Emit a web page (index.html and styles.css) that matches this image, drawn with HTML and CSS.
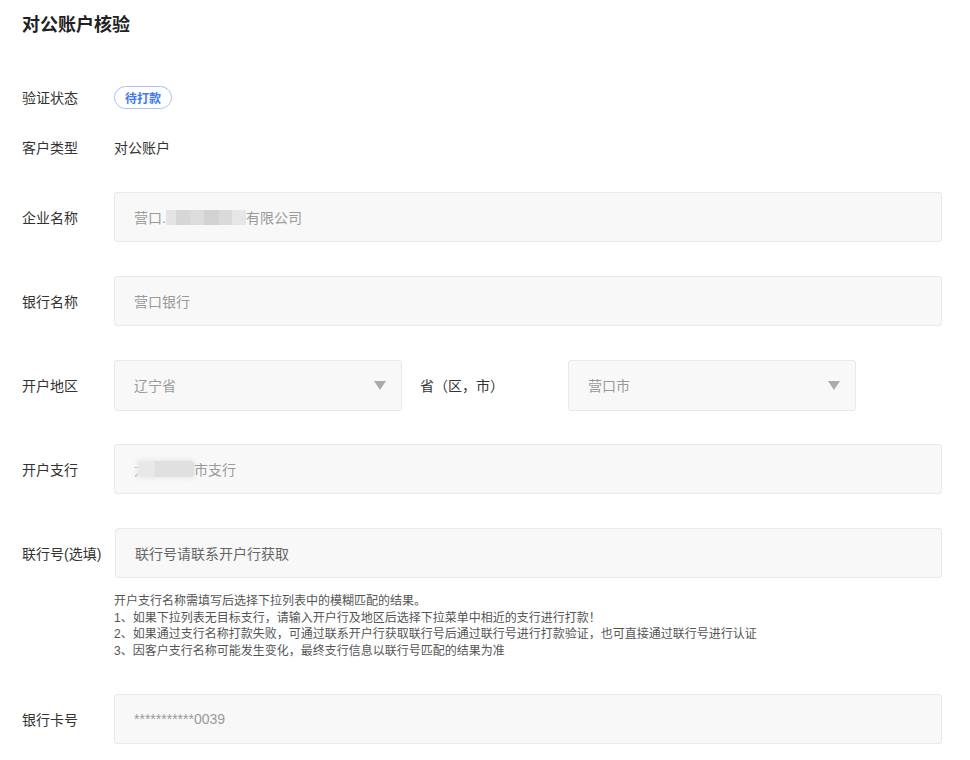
FILE: index.html
```html
<!DOCTYPE html>
<html lang="zh-CN">
<head>
<meta charset="utf-8">
<title>对公账户核验</title>
<link rel="stylesheet" href="styles.css">
</head>
<body>
<div class="page">
  <h1 class="title">对公账户核验</h1>

  <div class="row row-status">
    <div class="label">验证状态</div>
    <span class="badge">待打款</span>
  </div>

  <div class="row row-type">
    <div class="label">客户类型</div>
    <div class="value">对公账户</div>
  </div>

  <div class="row row-field row-first">
    <div class="label">企业名称</div>
    <div class="input">营口.<span class="mosaic mosaic-wide"></span>有限公司</div>
  </div>

  <div class="row row-field">
    <div class="label">银行名称</div>
    <div class="input">营口银行</div>
  </div>

  <div class="row row-field">
    <div class="label">开户地区</div>
    <div class="select">辽宁省<span class="caret"></span></div>
    <span class="region-text">省（区，市）</span>
    <div class="select">营口市<span class="caret"></span></div>
  </div>

  <div class="row row-field">
    <div class="label">开户支行</div>
    <div class="input">大<span class="mosaic mosaic-short"></span>市支行</div>
  </div>

  <div class="row row-field">
    <div class="label label-wide">联行号(选填)</div>
    <div class="input input-dark">联行号请联系开户行获取</div>
  </div>

  <div class="hint">
    <p>开户支行名称需填写后选择下拉列表中的模糊匹配的结果。</p>
    <p>1、如果下拉列表无目标支行，请输入开户行及地区后选择下拉菜单中相近的支行进行打款！</p>
    <p>2、如果通过支行名称打款失败，可通过联系开户行获取联行号后通过联行号进行打款验证，也可直接通过联行号进行认证</p>
    <p>3、因客户支行名称可能发生变化，最终支行信息以联行号匹配的结果为准</p>
  </div>

  <div class="row row-field row-card">
    <div class="label">银行卡号</div>
    <div class="input">***********0039</div>
  </div>
</div>
</body>
</html>
```

FILE: styles.css
```css
* {
  box-sizing: border-box;
}

html, body {
  margin: 0;
  padding: 0;
  background: #ffffff;
}

body {
  font-family: "Liberation Sans", "Noto Sans CJK SC", sans-serif;
  font-size: 14px;
  color: #333333;
}

.page {
  width: 970px;
  padding: 12px 28px 0 22px;
}

.title {
  margin: 0;
  font-size: 18px;
  line-height: 26px;
  font-weight: 700;
  color: #222222;
}

.row {
  display: flex;
  align-items: center;
}

.label {
  width: 92px;
  flex: none;
  font-size: 14px;
  color: #333333;
  white-space: nowrap;
}

.label-wide {
  width: 93px;
}

.row-status {
  height: 24px;
  margin-top: 47px;
}

.row-type {
  height: 24px;
  margin-top: 26px;
}

.value {
  color: #333333;
}

.badge {
  display: inline-flex;
  align-items: center;
  height: 23px;
  padding: 0 10px;
  border: 1px solid #a6c1fb;
  border-radius: 12px;
  color: #3f78f2;
  font-size: 12px;
  font-weight: 700;
}

.row-field {
  height: 50px;
  margin-top: 34px;
}

.row-first {
  margin-top: 33px;
}

.row-card {
  margin-top: 35px;
}

.input,
.select {
  height: 50px;
  display: flex;
  align-items: center;
  padding: 0 19px;
  background: #f8f8f8;
  border: 1px solid #e9e9e9;
  border-radius: 3px;
  color: #9a9a9a;
  font-size: 14px;
}

.input {
  flex: 1;
}

.input-dark {
  color: #666666;
}

.select {
  width: 288px;
  flex: none;
  height: 51px;
  justify-content: space-between;
  padding-right: 15px;
}

.caret {
  width: 0;
  height: 0;
  border-left: 6.5px solid transparent;
  border-right: 6.5px solid transparent;
  border-top: 9px solid #ababab;
}

.region-text {
  width: 166px;
  flex: none;
  padding-left: 18px;
  color: #333333;
  font-size: 14px;
}

.mosaic {
  display: inline-block;
  height: 15px;
  vertical-align: middle;
}

.mosaic-wide {
  width: 80px;
  background: linear-gradient(90deg,
    #e4e4e4 0 12%, #d6d6d6 12% 30%, #dcdcdc 30% 48%,
    #d2d2d2 48% 66%, #dadada 66% 82%, #e6e6e6 82% 100%);
}

.mosaic-short {
  width: 56px;
  height: 16px;
  margin-left: -10px;
  background: linear-gradient(90deg, #e8e8e8 0 30%, #e0e0e0 30% 100%);
  box-shadow: 0 0 4px 2px #ececec;
  border-radius: 3px;
}

.hint {
  margin: 15px 0 0 92px;
  font-size: 12px;
  line-height: 16.5px;
  color: #555555;
}

.hint p {
  margin: 0;
}
```
